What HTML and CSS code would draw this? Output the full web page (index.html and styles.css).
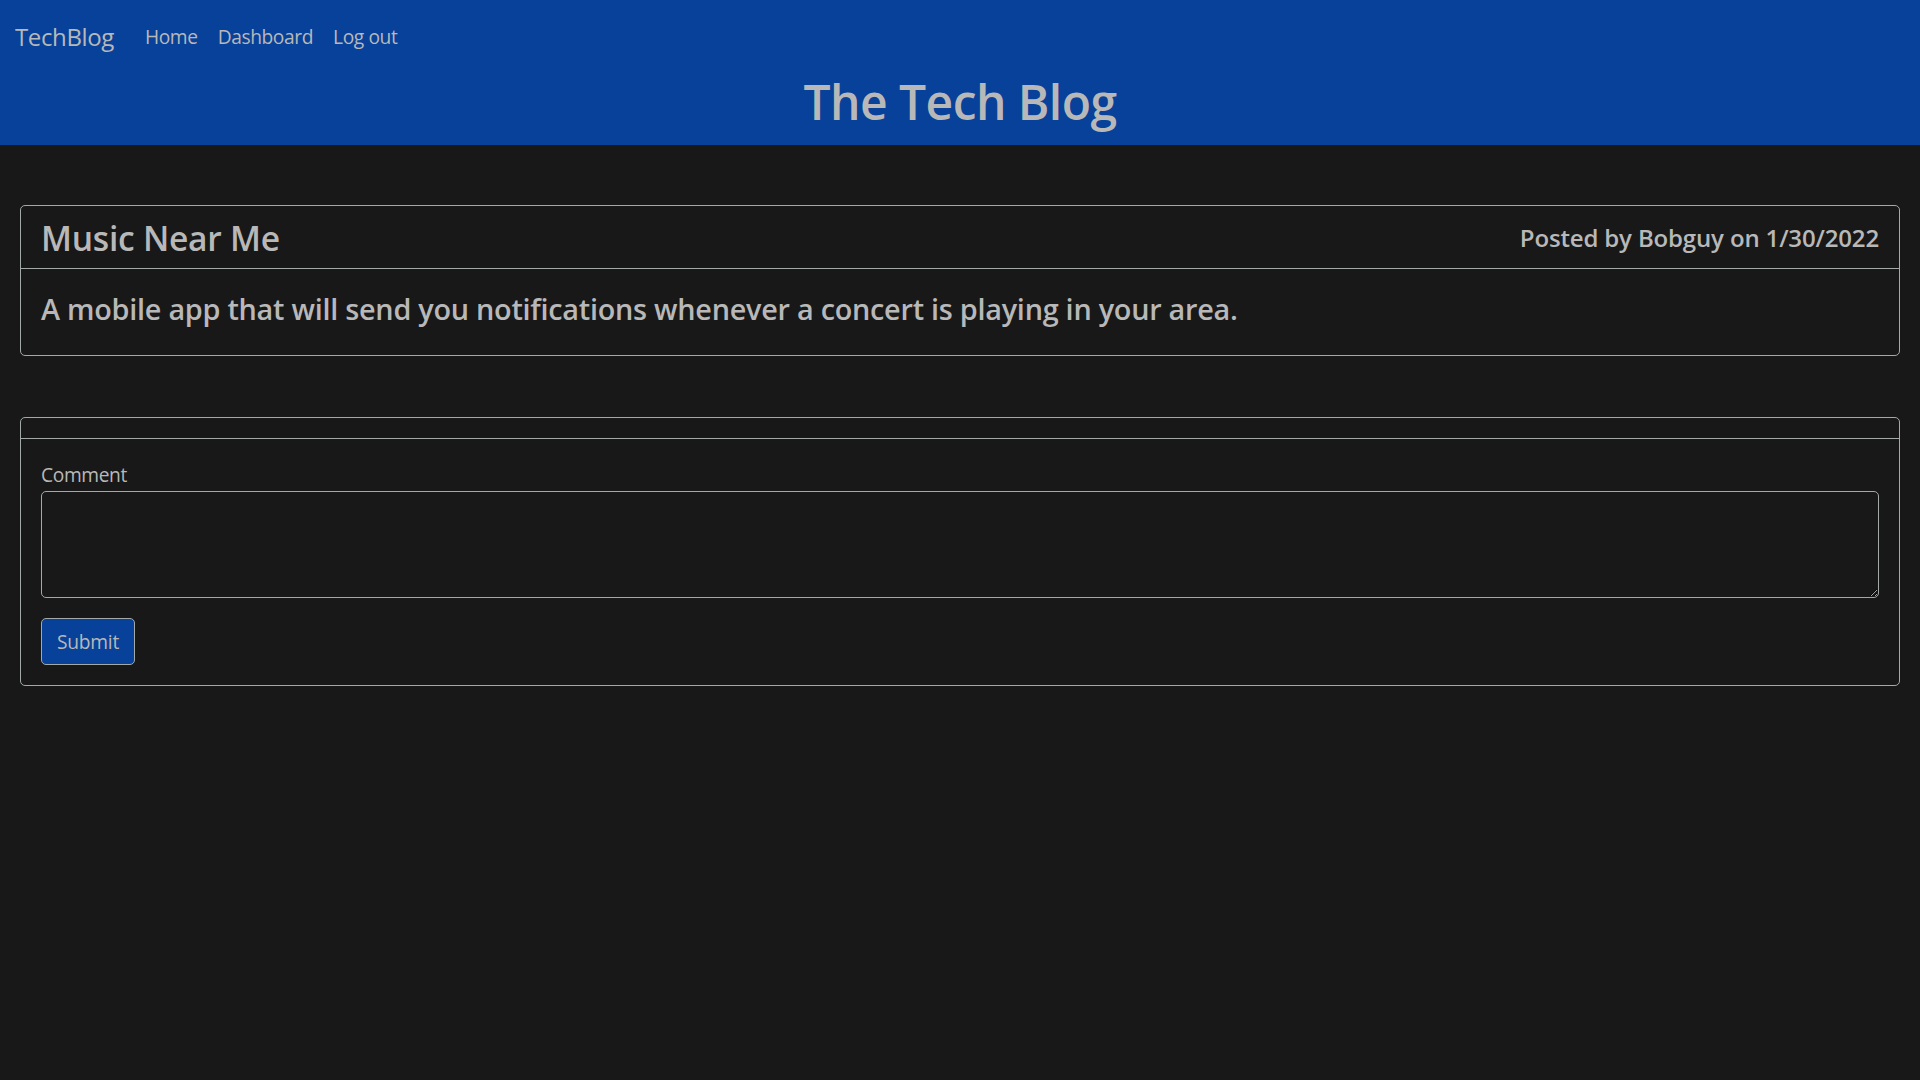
FILE: index.html
```html
<!DOCTYPE html>
<html lang="en">
<head>
<meta charset="utf-8">
<title>The Tech Blog</title>
<link rel="stylesheet" href="styles.css">
</head>
<body>
<header class="site-header">
  <nav class="navbar">
    <a class="brand" href="#">TechBlog</a>
    <ul class="nav-links">
      <li><a href="#">Home</a></li>
      <li><a href="#">Dashboard</a></li>
      <li><a href="#">Log out</a></li>
    </ul>
  </nav>
  <h1 class="site-title">The Tech Blog</h1>
</header>
<main class="content">
  <article class="card">
    <div class="card-header post-header">
      <h3 class="post-title">Music Near Me</h3>
      <h5 class="post-meta">Posted by Bobguy on 1/30/2022</h5>
    </div>
    <div class="card-body">
      <h4 class="post-text">A mobile app that will send you notifications whenever a concert is playing in your area.</h4>
    </div>
  </article>
  <section class="card comment-card">
    <div class="card-header"></div>
    <form class="card-body comment-form">
      <label class="form-label" for="comment">Comment</label>
      <textarea id="comment" class="form-control"></textarea>
      <button type="submit" class="btn">Submit</button>
    </form>
  </section>
</main>
</body>
</html>
```
FILE: styles.css
```css
* { box-sizing: border-box; }
html, body { margin: 0; padding: 0; }
body {
  background: #181818;
  color: #b8b8b8;
  font-family: "Open Sans", "Noto Sans", sans-serif;
  font-size: 19.2px;
  letter-spacing: -0.35px;
  line-height: 1.5;
}
.site-header {
  background: #08419a;
  height: 145px;
}
.navbar {
  display: flex;
  align-items: center;
  padding: 12px 15px 8px;
}
.brand {
  color: #b8b8b8;
  text-decoration: none;
  font-size: 24px;
  letter-spacing: -0.37px;
  line-height: 37.5px;
  padding: 6px 0;
  margin-right: 21px;
}
.nav-links {
  display: flex;
  list-style: none;
  margin: 0;
  padding: 0;
}
.nav-links a {
  display: block;
  color: #b8b8b8;
  text-decoration: none;
  letter-spacing: -0.4px;
  padding: 11px 10px 9px;
}
.site-title {
  margin: 0;
  padding-top: 2px;
  text-align: center;
  font-size: 48px;
  font-weight: 600;
  letter-spacing: -0.56px;
  line-height: 60px;
}
.content { padding: 0 20px; }
.card {
  border: 1px solid #a3a9a7;
  border-radius: 5px;
  margin-top: 60px;
}
.comment-card { margin-top: 61px; }
.card-header {
  padding: 10px 20px;
  border-bottom: 1px solid #a3a9a7;
}
.post-header {
  display: flex;
  justify-content: space-between;
  align-items: center;
  padding-bottom: 9px;
}
.post-title {
  margin: 0;
  padding-top: 1px;
  font-size: 33.6px;
  font-weight: 600;
  letter-spacing: -0.24px;
  line-height: 42px;
}
.post-meta {
  margin: 0;
  font-size: 24px;
  font-weight: 600;
  letter-spacing: -0.15px;
  line-height: 30px;
}
.card-body { padding: 20px; }
.post-text {
  margin: 2px 0 8px;
  font-size: 28.8px;
  font-weight: 600;
  letter-spacing: -0.25px;
  line-height: 36px;
}
.comment-form { display: flex; flex-direction: column; align-items: flex-start; }
.form-label { line-height: 32px; letter-spacing: -0.37px; }
.form-control {
  width: 100%;
  height: 107px;
  background: #181818;
  color: #b8b8b8;
  border: 1px solid #a3a9a7;
  border-radius: 5px;
  font: inherit;
  padding: 7px 15px;
  margin: 0 0 20px;
}
.btn {
  background: #08419a;
  color: #b8b8b8;
  border: 1px solid #a3a9a7;
  border-radius: 5px;
  font: inherit;
  letter-spacing: -0.25px;
  line-height: 30px;
  padding: 7.5px 15px;
}
```
